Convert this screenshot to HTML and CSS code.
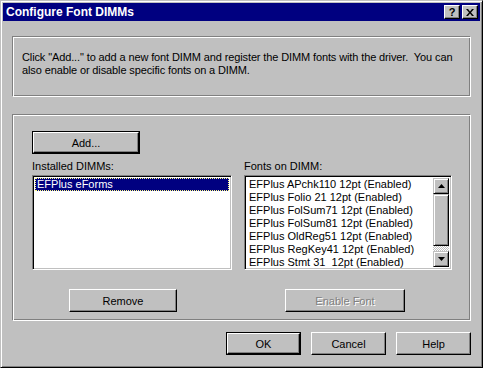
FILE: index.html
```html
<!DOCTYPE html>
<html lang="en">

<head>
    <meta charset="UTF-8">
    <title>Configure Font DIMMs</title>
    <link rel="stylesheet" href="styles.css">
</head>

<body>
    <div class="window">
        <div class="titlebar">
            <span class="title">Configure Font DIMMs</span>
            <div class="title-buttons">
                <button class="tbtn help-btn">?</button>
                <button class="tbtn close-btn">
                    <svg width="8" height="7" viewBox="0 0 8 7">
                        <path d="M0 0h2l2 2.5L6 0h2L5 3.5 8 7H6L4 4.5 2 7H0l3-3.5z" fill="#000" />
                    </svg>
                </button>
            </div>
        </div>

        <div class="content">
            <div class="group intro">
                <p>Click "Add..." to add a new font DIMM and register the DIMM fonts with the driver.&nbsp; You can
                    also enable or disable specific fonts on a DIMM.</p>
            </div>

            <div class="group dimms">
                <div class="col col-left">
                    <button class="btn default add-btn"><span>Add...</span></button>
                    <label>Installed DIMMs:</label>
                    <div class="listbox">
                        <ul class="items">
                            <li class="selected">EFPlus eForms</li>
                        </ul>
                    </div>
                    <button class="btn remove-btn">Remove</button>
                </div>
                <div class="col col-right">
                    <label>Fonts on DIMM:</label>
                    <div class="listbox">
                        <ul class="items">
                            <li>EFPlus APchk110 12pt (Enabled)</li>
                            <li>EFPlus Folio 21 12pt (Enabled)</li>
                            <li>EFPlus FolSum71 12pt (Enabled)</li>
                            <li>EFPlus FolSum81 12pt (Enabled)</li>
                            <li>EFPlus OldReg51 12pt (Enabled)</li>
                            <li>EFPlus RegKey41 12pt (Enabled)</li>
                            <li>EFPlus Stmt 31&nbsp; 12pt (Enabled)</li>
                        </ul>
                        <div class="scrollbar">
                            <div class="sb-btn">
                                <svg width="7" height="4" viewBox="0 0 7 4"><path d="M3.5 0L7 4H0z" fill="#000" /></svg>
                            </div>
                            <div class="sb-thumb"></div>
                            <div class="sb-track"></div>
                            <div class="sb-btn">
                                <svg width="7" height="4" viewBox="0 0 7 4"><path d="M0 0h7L3.5 4z" fill="#000" /></svg>
                            </div>
                        </div>
                    </div>
                    <button class="btn enable-btn" disabled>Enable Font</button>
                </div>
            </div>

            <div class="dialog-buttons">
                <button class="btn default"><span>OK</span></button>
                <button class="btn">Cancel</button>
                <button class="btn">Help</button>
            </div>
        </div>
    </div>
</body>

</html>
```

FILE: styles.css
```css
* {
    margin: 0;
    padding: 0;
    box-sizing: border-box;
}

body {
    font-family: "Liberation Sans", Arial, sans-serif;
    font-size: 11px;
    background-color: #c0c0c0;
    color: #000;
}

/* window frame */
.window {
    width: 483px;
    height: 368px;
    padding: 2px;
    background-color: #c0c0c0;
    border: 1px solid;
    border-color: #c0c0c0 #000 #000 #c0c0c0;
    box-shadow: inset 1px 1px #fff, inset -1px -1px #808080;
    display: flex;
    flex-direction: column;
}

.titlebar {
    height: 18px;
    background-color: #000080;
    color: #fff;
    display: flex;
    align-items: center;
    justify-content: space-between;
    padding: 0 2px 0 3px;
}

.title {
    font-weight: bold;
    font-size: 12px;
}

.title-buttons {
    display: flex;
    gap: 2px;
}

.tbtn {
    width: 16px;
    height: 14px;
    background-color: #c0c0c0;
    border: 1px solid;
    border-color: #fff #000 #000 #fff;
    box-shadow: inset -1px -1px #808080;
    display: flex;
    align-items: center;
    justify-content: center;
    font-family: "Liberation Sans", Arial, sans-serif;
    font-weight: bold;
    font-size: 11px;
    line-height: 1;
    color: #000;
}

.content {
    flex: 1;
    padding: 15px 9px 0;
    display: flex;
    flex-direction: column;
}

/* etched group boxes */
.group {
    border: 1px solid;
    border-color: #808080 #fff #fff #808080;
    box-shadow: inset 1px 1px #fff, inset -1px -1px #808080;
}

.intro {
    height: 61px;
    padding: 14px 0 0 9px;
    line-height: 13px;
    letter-spacing: -0.12px;
}

.dimms {
    height: 207px;
    margin-top: 17px;
    padding: 16px 0 0 19px;
    display: flex;
    gap: 12px;
}

.col {
    display: flex;
    flex-direction: column;
    align-items: flex-start;
}

.col-left {
    width: 200px;
}

.col-right {
    width: 208px;
    padding-top: 29px;
}

label {
    display: block;
    line-height: 13px;
    margin: 6px 0 2px;
}

.col-right label {
    margin-top: 0;
}

/* buttons */
.btn {
    height: 23px;
    background-color: #c0c0c0;
    border: 1px solid;
    border-color: #fff #000 #000 #fff;
    box-shadow: inset -1px -1px #808080;
    font-family: "Liberation Sans", Arial, sans-serif;
    font-size: 11px;
    color: #000;
}

.btn.default {
    border: 1px solid #000;
    box-shadow: none;
    padding: 0;
    display: flex;
}

.btn.default span {
    flex: 1;
    display: flex;
    align-items: center;
    justify-content: center;
    border: 1px solid;
    border-color: #fff #000 #000 #fff;
    box-shadow: inset -1px -1px #808080;
}

.add-btn {
    width: 108px;
}

.remove-btn {
    width: 108px;
    margin: 19px 0 0 37px;
}

.enable-btn {
    width: 120px;
    margin: 19px 0 0 41px;
    color: #808080;
    text-shadow: 1px 1px #fff;
}

/* list boxes */
.listbox {
    width: 100%;
    height: 95px;
    background-color: #fff;
    border: 1px solid;
    border-color: #808080 #fff #fff #808080;
    box-shadow: inset 1px 1px #000, inset -1px -1px #c0c0c0;
    padding: 1px;
    display: flex;
}

.items {
    flex: 1;
    list-style: none;
    padding: 1px 0 0 1px;
}

.items li {
    line-height: 13px;
    height: 13px;
    padding-left: 2px;
    white-space: nowrap;
}

.items li.selected {
    background-color: #000080;
    color: #fff;
    outline: 1px dotted #ffff80;
    outline-offset: -1px;
    margin-right: 1px;
}

.scrollbar {
    width: 16px;
    display: flex;
    flex-direction: column;
    margin: 1px 1px 1px 0;
}

.sb-btn,
.sb-thumb {
    background-color: #c0c0c0;
    border: 1px solid;
    border-color: #c0c0c0 #000 #000 #c0c0c0;
    box-shadow: inset 1px 1px #fff, inset -1px -1px #808080;
}

.sb-btn {
    height: 16px;
    display: flex;
    align-items: center;
    justify-content: center;
}

.sb-thumb {
    height: 52px;
}

.sb-track {
    flex: 1;
    background: repeating-conic-gradient(#c0c0c0 0 25%, #fff 0 50%) 0 0 / 2px 2px;
}

.dialog-buttons {
    display: flex;
    justify-content: flex-end;
    gap: 10px;
    margin-top: 11px;
}

.dialog-buttons .btn {
    width: 75px;
}
```
